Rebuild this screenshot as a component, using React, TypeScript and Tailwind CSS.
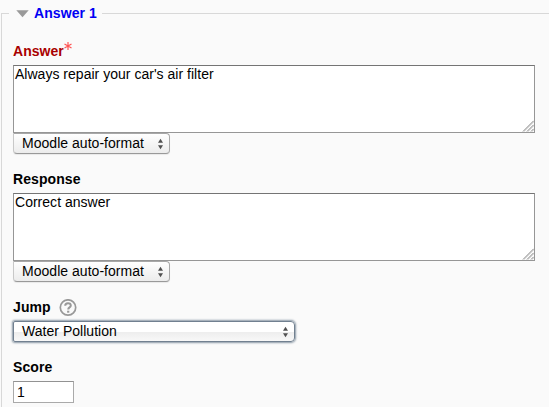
function Stepper() {
  return (
    <svg width="7" height="12" viewBox="0 0 7 12" className="shrink-0" fill="#505050">
      <path d="M3.5 .7 6 4.7H1ZM1 7.3H6L3.5 11.3Z" />
    </svg>
  );
}

function Grip() {
  return (
    <svg width="12" height="12" viewBox="0 0 12 12" className="self-end" fill="none">
      <path d="M1 11.5 11.7.8M5 11.5 11.7 4.8M9 11.5 11.7 8.8" stroke="#808080" />
      <path d="M2.2 11.8 12 2M6.2 11.8 12 6M10.2 11.8 12 10" stroke="#d2d2d2" strokeWidth=".7" />
    </svg>
  );
}

function Editor({ text }: { text: string }) {
  return (
    <>
      <div className="flex h-[68px] w-[522px] justify-between border border-[#969696] border-t-[#747474] bg-white pl-px">
        <span className="leading-4 tracking-[0.02px]">{text}</span>
        <Grip />
      </div>
      <div className="flex h-[21px] w-[157px] items-center justify-between rounded-b-[4px] rounded-tr-[4px] border border-[#a8a8a8] border-b-[#999] border-l-[#c8c8c8] bg-linear-to-b from-white via-[#f5f5f5] to-[#ececec] pr-[5px] pl-2 shadow-[0_1px_1px_#00000012]">
        <span className="pb-0.5 leading-4 tracking-[0.03px]">Moodle auto-format</span>
        <Stepper />
      </div>
    </>
  );
}

export default function App() {
  return (
    <main className="h-[407px] overflow-hidden bg-[#fafafa] font-['Liberation_Sans',Arial,sans-serif] text-[14px] text-black">
      <header className="flex h-[26px] items-center pl-px">
        <div className="mt-[13px] h-[13px] w-2 self-start border-t border-l border-[#d8d8d8]" />
        <svg width="13" height="8" viewBox="0 0 13 8" className="ml-[7px] mt-[2px]">
          <path d="M.3.3H12.7L6.5 7.3Z" fill="#999" />
        </svg>
        <h2 className="ml-[5px] font-bold leading-4 tracking-[0.08px] text-[#0000f4]">Answer 1</h2>
        <div className="ml-[5px] mt-[13px] h-px grow self-start bg-[#d8d8d8]" />
      </header>
      <div className="ml-px h-[381px] border-l border-[#d8d8d8] pl-[11px]">
        <div className="flex h-[39px] pt-[17px] font-bold leading-4 text-[#a90000]">
          <span className="tracking-[0.05px]">Answer</span>
          <svg width="8" height="8" viewBox="0 0 8 8" className="-mt-px" stroke="#ff5555" strokeWidth="1.2">
            <path d="M4 0V8M.5 2 7.5 6M7.5 2 .5 6" />
          </svg>
        </div>
        <Editor text="Always repair your car's air filter" />
        <div className="h-[39px] pt-[17px] font-bold leading-4 tracking-[0.08px]">Response</div>
        <Editor text="Correct answer" />
        <div className="flex h-[39px] pt-[17px] font-bold leading-4">
          <span className="tracking-[0.1px]">Jump</span>
          <svg width="18" height="18" viewBox="0 0 18 18" className="ml-2" fill="none" stroke="#999">
            <circle cx="9" cy="8.5" r="7.7" strokeWidth="1.7" />
            <path d="M6.2 6.8C6.2 3.2 11.8 3.4 11.8 6.6 11.8 8.6 9.2 8.3 9.2 10.5" strokeWidth="2" />
            <path d="M9.2 11.7V13.7" strokeWidth="2.2" />
          </svg>
        </div>
        <div className="flex h-[21px] w-[282px] items-center justify-between rounded-r-[4px] rounded-l-[2px] border border-[#718090] bg-linear-to-b from-white from-50% via-[#eee] via-55% to-[#f8f8f8] pr-[5px] pl-2 shadow-[0_0_2px_1px_#8b99a6]">
          <span className="pb-0.5 leading-4 tracking-[0.03px]">Water Pollution</span>
          <Stepper />
        </div>
        <div className="h-[39px] pt-[17px] font-bold leading-4 tracking-[0.08px]">Score</div>
        <div className="flex h-[22px] w-[61px] items-center border border-[#aaa] border-t-[#929292] bg-white pl-[3px]">1</div>
      </div>
    </main>
  );
}
